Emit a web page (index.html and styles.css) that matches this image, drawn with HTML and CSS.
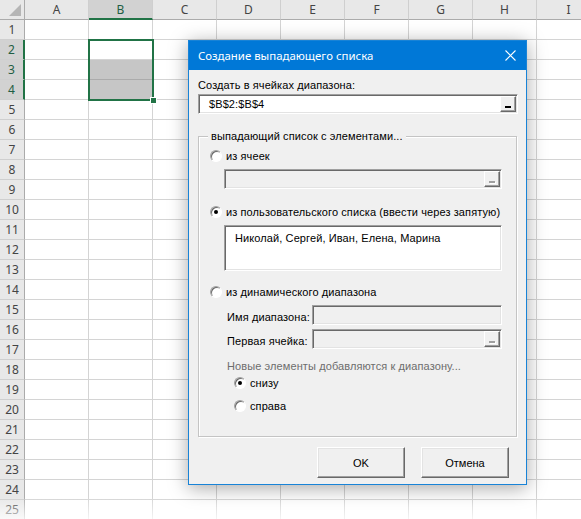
FILE: index.html
```html
<!DOCTYPE html>
<html lang="ru">

<head>
    <meta charset="UTF-8">
    <meta name="viewport" content="width=device-width, initial-scale=1.0">
    <title>Создание выпадающего списка</title>
    <link rel="stylesheet" href="styles.css">
</head>

<body>
    <div class="sheet">
        <div class="corner"></div>
        <div class="col-heads">
            <div class="col-head">A</div>
            <div class="col-head selected">B</div>
            <div class="col-head">C</div>
            <div class="col-head">D</div>
            <div class="col-head">E</div>
            <div class="col-head">F</div>
            <div class="col-head">G</div>
            <div class="col-head">H</div>
            <div class="col-head">I</div>
        </div>
        <div class="row-heads">
            <div class="row-head">1</div>
            <div class="row-head selected">2</div>
            <div class="row-head selected">3</div>
            <div class="row-head selected">4</div>
            <div class="row-head">5</div>
            <div class="row-head">6</div>
            <div class="row-head">7</div>
            <div class="row-head">8</div>
            <div class="row-head">9</div>
            <div class="row-head">10</div>
            <div class="row-head">11</div>
            <div class="row-head">12</div>
            <div class="row-head">13</div>
            <div class="row-head">14</div>
            <div class="row-head">15</div>
            <div class="row-head">16</div>
            <div class="row-head">17</div>
            <div class="row-head">18</div>
            <div class="row-head">19</div>
            <div class="row-head">20</div>
            <div class="row-head">21</div>
            <div class="row-head">22</div>
            <div class="row-head">23</div>
            <div class="row-head">24</div>
            <div class="row-head">25</div>
        </div>
        <div class="cells">
            <div class="range-fill"></div>
            <div class="selection"><span class="fill-handle"></span></div>
        </div>
        <div class="fade"></div>
    </div>

    <div class="dialog">
        <div class="dialog-title">
            <span>Создание выпадающего списка</span>
            <svg class="close" width="11" height="11" viewBox="0 0 11 11">
                <path d="M0.5 0.5 L10.5 10.5 M10.5 0.5 L0.5 10.5" stroke="#fff" stroke-width="1.1" fill="none" />
            </svg>
        </div>

        <div class="dialog-body">
            <div class="label">Создать в ячейках диапазона:</div>
            <div class="ref-input main-ref">
                <span class="ref-text">$B$2:$B$4</span>
                <span class="ref-btn"><i></i></span>
            </div>

            <div class="group">
                <span class="group-title">выпадающий список с элементами...</span>

                <div class="radio-row first"><span class="radio"></span>из ячеек</div>
                <div class="ref-input disabled cells-ref">
                    <span class="ref-text"></span>
                    <span class="ref-btn"><i></i></span>
                </div>

                <div class="radio-row custom"><span class="radio checked"></span>из пользовательского списка (ввести через запятую)</div>
                <div class="list-box">Николай, Сергей, Иван, Елена, Марина</div>

                <div class="radio-row dynamic"><span class="radio"></span>из динамического диапазона</div>
                <div class="field-row name-row">
                    <span class="field-label">Имя диапазона:</span>
                    <div class="ref-input disabled"><span class="ref-text"></span></div>
                </div>
                <div class="field-row first-row">
                    <span class="field-label">Первая ячейка:</span>
                    <div class="ref-input disabled">
                        <span class="ref-text"></span>
                        <span class="ref-btn"><i></i></span>
                    </div>
                </div>

                <div class="note">Новые элементы добавляются к диапазону...</div>
                <div class="radio-row sub bottom"><span class="radio checked"></span>снизу</div>
                <div class="radio-row sub right"><span class="radio"></span>справа</div>
            </div>

            <div class="dialog-buttons">
                <button>OK</button>
                <button>Отмена</button>
            </div>
        </div>
    </div>
</body>

</html>
```

FILE: styles.css
```css
* {
    box-sizing: border-box;
}

html,
body {
    margin: 0;
    height: 100%;
    overflow: hidden;
    background: #fff;
}

body {
    font-family: "Noto Sans", sans-serif;
}

/* Worksheet */
.sheet {
    position: relative;
    display: grid;
    grid-template-columns: 25px 1fr;
    grid-template-rows: 20px 1fr;
    width: 581px;
    height: 519px;
    overflow: hidden;
}

.corner {
    position: relative;
    background: #e8e8e8;
    border-right: 1px solid #ababab;
    border-bottom: 1px solid #ababab;
}

.corner::after {
    content: "";
    position: absolute;
    right: 3px;
    bottom: 3px;
    border-style: solid;
    border-width: 0 0 12px 12px;
    border-color: transparent transparent #b5b5b5 transparent;
}

.col-heads {
    display: flex;
}

.col-head {
    flex: 0 0 64px;
    height: 20px;
    line-height: 19px;
    text-align: center;
    font-size: 12px;
    color: #444;
    background: #e8e8e8;
    border-right: 1px solid #cfcfcf;
    border-bottom: 1px solid #ababab;
}

.col-head.selected {
    background: #d2d2d2;
    color: #1f5e43;
    border-bottom: 2px solid #217346;
}

.row-heads {
    display: flex;
    flex-direction: column;
}

.row-head {
    flex: 0 0 20px;
    line-height: 19px;
    text-align: center;
    font-size: 12px;
    color: #444;
    background: #e8e8e8;
    border-bottom: 1px solid #cfcfcf;
    border-right: 1px solid #ababab;
}

.row-head.selected {
    background: #d2d2d2;
    color: #1f5e43;
    border-right: 2px solid #217346;
}

.cells {
    position: relative;
    background-image:
        linear-gradient(to right, transparent 63px, #d4d4d4 63px),
        linear-gradient(to bottom, transparent 19px, #d4d4d4 19px);
    background-size: 64px 20px;
}

.range-fill {
    position: absolute;
    left: 65px;
    top: 40px;
    width: 62px;
    height: 39px;
    background: linear-gradient(to bottom, #c6c6c6 19px, #ababab 19px, #ababab 20px, #c6c6c6 20px);
}

.selection {
    position: absolute;
    left: 63px;
    top: 19px;
    width: 66px;
    height: 62px;
    border: 2px solid #217346;
}

.fill-handle {
    position: absolute;
    right: -5px;
    bottom: -5px;
    width: 7px;
    height: 7px;
    background: #217346;
    border: 1px solid #fff;
}

.fade {
    position: absolute;
    left: 0;
    right: 0;
    bottom: 0;
    height: 22px;
    background: linear-gradient(rgba(255, 255, 255, 0), rgba(255, 255, 255, 0.75));
}

/* Dialog window */
.dialog {
    position: absolute;
    left: 188px;
    top: 40px;
    width: 339px;
    height: 445px;
    display: flex;
    flex-direction: column;
    background: #f0f0f0;
    border: 1px solid #1883d7;
    box-shadow: 0 3px 18px rgba(0, 0, 0, 0.35);
    font-family: "Liberation Sans", Arial, sans-serif;
    font-size: 11px;
    color: #000;
}

.dialog-title {
    flex: 0 0 29px;
    display: flex;
    align-items: center;
    justify-content: space-between;
    padding: 0 10px 0 9px;
    background: #0078d7;
    color: #fff;
    font-family: "Noto Sans", sans-serif;
    font-size: 11.4px;
}

.dialog-body {
    padding: 0 9px;
    letter-spacing: 0.1px;
}

.label {
    margin-top: 8px;
    line-height: 14px;
}

/* Sunken edit box with the collapse button */
.ref-input {
    display: flex;
    align-items: center;
    height: 20px;
    background: #fff;
    border: 1px solid;
    border-color: #a0a0a0 #fff #fff #a0a0a0;
    box-shadow: inset 1px 1px 0 #696969, inset -1px -1px 0 #e3e3e3;
}

.ref-input.disabled {
    background: #f0f0f0;
}

.ref-text {
    flex: 1;
    padding-left: 10px;
}

.ref-btn {
    position: relative;
    width: 16px;
    height: 16px;
    margin-right: 1px;
    background: #f0f0f0;
    border: 1px solid;
    border-color: #fff #696969 #696969 #fff;
    box-shadow: inset -1px -1px 0 #a0a0a0;
}

.ref-btn i {
    position: absolute;
    left: 4px;
    bottom: 3px;
    width: 6px;
    height: 2px;
    background: #000;
}

.disabled .ref-btn i {
    background: #a0a0a0;
    box-shadow: 1px 1px 0 #fff;
}

.main-ref {
    margin-top: 2px;
    width: 320px;
}

/* Group box */
.group {
    position: relative;
    margin-top: 22px;
    height: 301px;
    padding: 0 14px 0 11px;
    border: 1px solid #c4c4c4;
    box-shadow: inset 1px 1px 0 #fff, 1px 1px 0 #fff;
}

.group-title {
    position: absolute;
    left: 9px;
    top: -8px;
    padding: 0 3px;
    line-height: 14px;
    background: #f0f0f0;
}

.radio-row {
    display: flex;
    align-items: center;
    gap: 4px;
    height: 14px;
    line-height: 14px;
}

.radio {
    position: relative;
    flex: 0 0 12px;
    width: 12px;
    height: 12px;
    border-radius: 50%;
    background: #fff;
    border: 1px solid;
    border-color: #a0a0a0 #fff #fff #a0a0a0;
    box-shadow: inset 1px 1px 0 #696969;
}

.radio.checked::after {
    content: "";
    position: absolute;
    left: 3px;
    top: 3px;
    width: 4px;
    height: 4px;
    border-radius: 50%;
    background: #000;
}

.radio-row.first {
    margin-top: 12px;
}

.cells-ref {
    margin: 6px 0 0 14px;
}

.radio-row.custom {
    margin-top: 16px;
}

.list-box {
    margin: 6px 0 0 14px;
    height: 46px;
    padding: 5px 0 0 10px;
    line-height: 14px;
    background: #fff;
    border: 1px solid;
    border-color: #a0a0a0 #fff #fff #a0a0a0;
    box-shadow: inset 1px 1px 0 #696969, inset -1px -1px 0 #e3e3e3;
}

.radio-row.dynamic {
    margin-top: 14px;
}

.field-row {
    display: flex;
    align-items: center;
    margin-left: 14px;
}

.field-row .ref-input {
    flex: 1;
}

.field-label {
    flex: 0 0 88px;
    padding: 4px 0 0 3px;
}

.name-row {
    margin-top: 6px;
}

.first-row {
    margin-top: 4px;
}

.note {
    margin: 10px 0 0 17px;
    line-height: 14px;
    color: #6d6d6d;
}

.radio-row.sub {
    margin-left: 24px;
}

.radio-row.bottom {
    margin-top: 3px;
}

.radio-row.right {
    margin-top: 9px;
}

/* Dialog buttons */
.dialog-buttons {
    display: flex;
    justify-content: flex-end;
    gap: 16px;
    margin-top: 10px;
    padding-right: 8px;
}

.dialog-buttons button {
    width: 88px;
    height: 31px;
    margin: 0;
    padding: 0;
    font-family: inherit;
    font-size: 11px;
    color: #000;
    background: #f0f0f0;
    border: 1px solid;
    border-color: #fff #696969 #696969 #fff;
    box-shadow: inset -1px -1px 0 #a0a0a0, inset 1px 1px 0 #e3e3e3;
}
```
